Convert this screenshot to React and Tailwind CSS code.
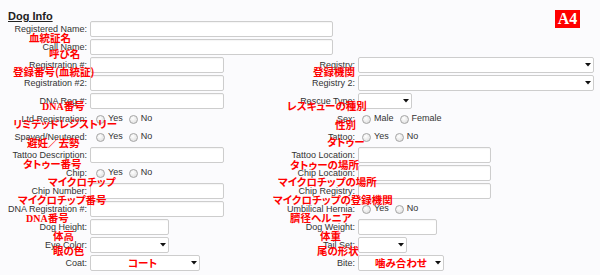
import React from "react";

const lbl = "text-right whitespace-nowrap text-[9px] leading-[18px] text-[#333] pr-[1px]";

function TextInput({ w }) {
  return <div className={`h-[16px] rounded-[2px] border border-[#cdcdcd] bg-white shadow-[inset_0_1px_1px_rgba(0,0,0,0.04)] ${w}`} />;
}

function Select({ w }) {
  return (
    <div className={`h-[16px] rounded-[2px] border border-[#cdcdcd] bg-white flex items-center justify-end pr-[2px] ${w}`}>
      <svg width="6" height="4" viewBox="0 0 6 4"><path d="M0 0H6L3 3.5Z" fill="#111" /></svg>
    </div>
  );
}

function Radio() {
  return <span className="inline-block w-[9px] h-[9px] rounded-full border border-[#a5a5a5] bg-[radial-gradient(circle_at_40%_35%,#ffffff,#d9d9d9)]" />;
}

function Radios({ a, b, ml = "ml-[6px]" }) {
  return (
    <div className={`flex items-center h-[18px] text-[9px] text-[#333] ${ml}`}>
      <Radio />
      <span className="ml-[3px]">{a}</span>
      <span className="ml-[6px] flex items-center"><Radio /></span>
      <span className="ml-[3px]">{b}</span>
    </div>
  );
}

function Cell({ children }) {
  return <div className="h-[18px] flex items-center">{children}</div>;
}

const notes = [
  { t: "血統証名", x: 29, y: 38 },
  { t: "呼び名", x: 49, y: 54 },
  { t: "登録番号(血統証)", x: 13, y: 72 },
  { t: "登録機関", x: 313, y: 72 },
  { t: "DNA", x: 42, y: 106, dna: true },
  { t: "レスキューの種別", x: 287, y: 106 },
  { t: "リミテッドレジストリー", x: 13, y: 124 },
  { t: "性別", x: 335, y: 124.5 },
  { t: "避妊／去勢", x: 27, y: 143 },
  { t: "タトゥー", x: 327, y: 142 },
  { t: "タトゥー番号", x: 23, y: 164 },
  { t: "タトゥーの場所", x: 290, y: 164.5 },
  { t: "マイクロチップ", x: 48, y: 181.5 },
  { t: "マイクロチップの場所", x: 278, y: 181.5 },
  { t: "マイクロチップ番号", x: 18, y: 200 },
  { t: "マイクロチップの登録機関", x: 273, y: 199.5 },
  { t: "DNA", x: 26, y: 218, dna: true },
  { t: "臍径ヘルニア", x: 290, y: 218 },
  { t: "体高", x: 53, y: 236 },
  { t: "体重", x: 320, y: 236 },
  { t: "眼の色", x: 53, y: 251 },
  { t: "尾の形状", x: 317, y: 251 },
  { t: "コート", x: 128, y: 262.5 },
  { t: "噛み合わせ", x: 375, y: 262.5 },
];

export default function App() {
  return (
    <div className="relative w-[600px] h-[275px] overflow-hidden bg-[#fbfbfd] font-['Liberation_Sans',Arial,sans-serif]">
      <div className="pl-[8px] pt-[3px] h-[20px]">
        <span className="text-[11px] leading-[13px] font-bold underline text-[#222]">Dog Info</span>
      </div>
      <div className="grid grid-cols-[88px_178px_86px_1fr] gap-x-[2px] auto-rows-[18px]">
        <div className={lbl}>Registered Name:</div>
        <div className="col-span-3"><Cell><TextInput w="w-[243px]" /></Cell></div>

        <div className={lbl}>Call Name:</div>
        <div className="col-span-3"><Cell><TextInput w="w-[243px]" /></Cell></div>

        <div className={lbl}>Registration #:</div>
        <Cell><TextInput w="w-[134px]" /></Cell>
        <div className={lbl}>Registry:</div>
        <Cell><Select w="w-[236px]" /></Cell>

        <div className={lbl}>Registration #2:</div>
        <Cell><TextInput w="w-[134px]" /></Cell>
        <div className={lbl}>Registry 2:</div>
        <Cell><Select w="w-[236px]" /></Cell>

        <div className={lbl}>DNA Reg #:</div>
        <Cell><TextInput w="w-[134px]" /></Cell>
        <div className={lbl}>Rescue Type:</div>
        <Cell><Select w="w-[54px]" /></Cell>

        <div className={lbl}>Ltd Registration:</div>
        <Radios a="Yes" b="No" />
        <div className={lbl}>Sex:</div>
        <Radios a="Male" b="Female" ml="ml-[4px]" />

        <div className={lbl}>Spayed/Neutered:</div>
        <Radios a="Yes" b="No" />
        <div className={lbl}>Tattoo:</div>
        <Radios a="Yes" b="No" ml="ml-[4px]" />

        <div className={lbl}>Tattoo Description:</div>
        <Cell><TextInput w="w-[134px]" /></Cell>
        <div className={lbl}>Tattoo Location:</div>
        <Cell><TextInput w="w-[133px]" /></Cell>

        <div className={lbl}>Chip:</div>
        <Radios a="Yes" b="No" />
        <div className={lbl}>Chip Location:</div>
        <Cell><TextInput w="w-[133px]" /></Cell>

        <div className={lbl}>Chip Number:</div>
        <Cell><TextInput w="w-[134px]" /></Cell>
        <div className={lbl}>Chip Registry:</div>
        <Cell><TextInput w="w-[133px]" /></Cell>

        <div className={lbl}>DNA Registration #:</div>
        <Cell><TextInput w="w-[134px]" /></Cell>
        <div className={lbl}>Umbilical Hernia:</div>
        <Radios a="Yes" b="No" ml="ml-[4px]" />

        <div className={lbl}>Dog Height:</div>
        <Cell><TextInput w="w-[79px]" /></Cell>
        <div className={lbl}>Dog Weight:</div>
        <Cell><TextInput w="w-[79px]" /></Cell>

        <div className={lbl}>Eye Color:</div>
        <Cell><Select w="w-[79px]" /></Cell>
        <div className={lbl}>Tail Set:</div>
        <Cell><Select w="w-[49px]" /></Cell>

        <div className={lbl}>Coat:</div>
        <Cell><Select w="w-[110px]" /></Cell>
        <div className={lbl}>Bite:</div>
        <Cell><Select w="w-[86px]" /></Cell>
      </div>

      {notes.map((n, i) => (
        <div
          key={i}
          className="absolute whitespace-nowrap text-[10.5px] leading-[12px] font-bold text-[#ff0000] font-['Noto_Sans_CJK_JP',sans-serif] [font-feature-settings:'palt']"
          style={{ left: n.x, top: n.y - 6 }}
        >
          {n.dna ? (
            <>
              <span className="font-['Liberation_Serif',serif] text-[10px]">DNA</span>番号
            </>
          ) : (
            n.t
          )}
        </div>
      ))}

      <div className="absolute left-[555px] top-[10px] w-[25px] h-[18px] bg-[#ff0000] flex items-center justify-center text-white font-bold text-[16px] leading-[18px] font-['Liberation_Serif',serif]">
        A4
      </div>
    </div>
  );
}
